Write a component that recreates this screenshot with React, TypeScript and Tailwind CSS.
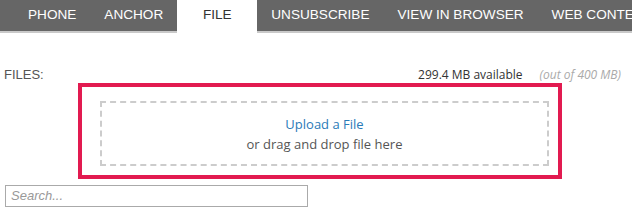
import React from "react";

const tabs = [
  { label: "PHONE", active: false },
  { label: "ANCHOR", active: false },
  { label: "FILE", active: true },
  { label: "UNSUBSCRIBE", active: false },
  { label: "VIEW IN BROWSER", active: false },
  { label: "WEB CONTENT", active: false },
];

export default function App() {
  return (
    <div className="w-[632px] h-[215px] overflow-hidden bg-white relative">
      <nav className="flex items-start h-[33px] bg-[#666666] border-b-2 border-[#c9c9c9] pl-[14px] whitespace-nowrap font-['Liberation_Sans',Arial,sans-serif] text-[13.6px]">
        {tabs.map((t) =>
          t.active ? (
            <div
              key={t.label}
              className="h-[33px] w-[80px] shrink-0 flex items-center justify-center bg-white text-[#333333] pb-[2px]"
            >
              {t.label}
            </div>
          ) : (
            <div
              key={t.label}
              className="h-[31px] shrink-0 flex items-center px-[14px] text-white"
            >
              {t.label}
            </div>
          )
        )}
      </nav>

      <div className="px-[5px]">
        <div className="mt-[34px] h-[16px] flex items-center justify-between pr-[6px]">
          <span className="font-['Liberation_Sans',Arial,sans-serif] text-[13px] text-[#555555] leading-[16px] -ml-[1px]">
            FILES:
          </span>
          <span className="font-['Open_Sans',sans-serif] text-[12px] leading-[16px] text-[#333333]">
            299.4 MB available
            <span className="italic text-[#aaaaaa] ml-[17px]">(out of 400 MB)</span>
          </span>
        </div>

        <div className="ml-[73px] w-[484px] h-[96px] border-4 border-[#e21a50] pt-[14px] pl-[18px]">
          <div className="w-[449px] h-[65px] border-2 border-dashed border-[#cccccc] flex flex-col items-center justify-center font-['Open_Sans',sans-serif] text-[13px] leading-[20px]">
            <span className="text-[#2a7bb8]">Upload a File</span>
            <span className="text-[#555555]">or drag and drop file here</span>
          </div>
        </div>

        <div className="mt-[6px] w-[303px] h-[22px] border border-[#aaaaaa] flex items-center px-[5px]">
          <span className="font-['Liberation_Sans',Arial,sans-serif] italic text-[13px] text-[#999999]">
            Search...
          </span>
        </div>
      </div>
    </div>
  );
}
